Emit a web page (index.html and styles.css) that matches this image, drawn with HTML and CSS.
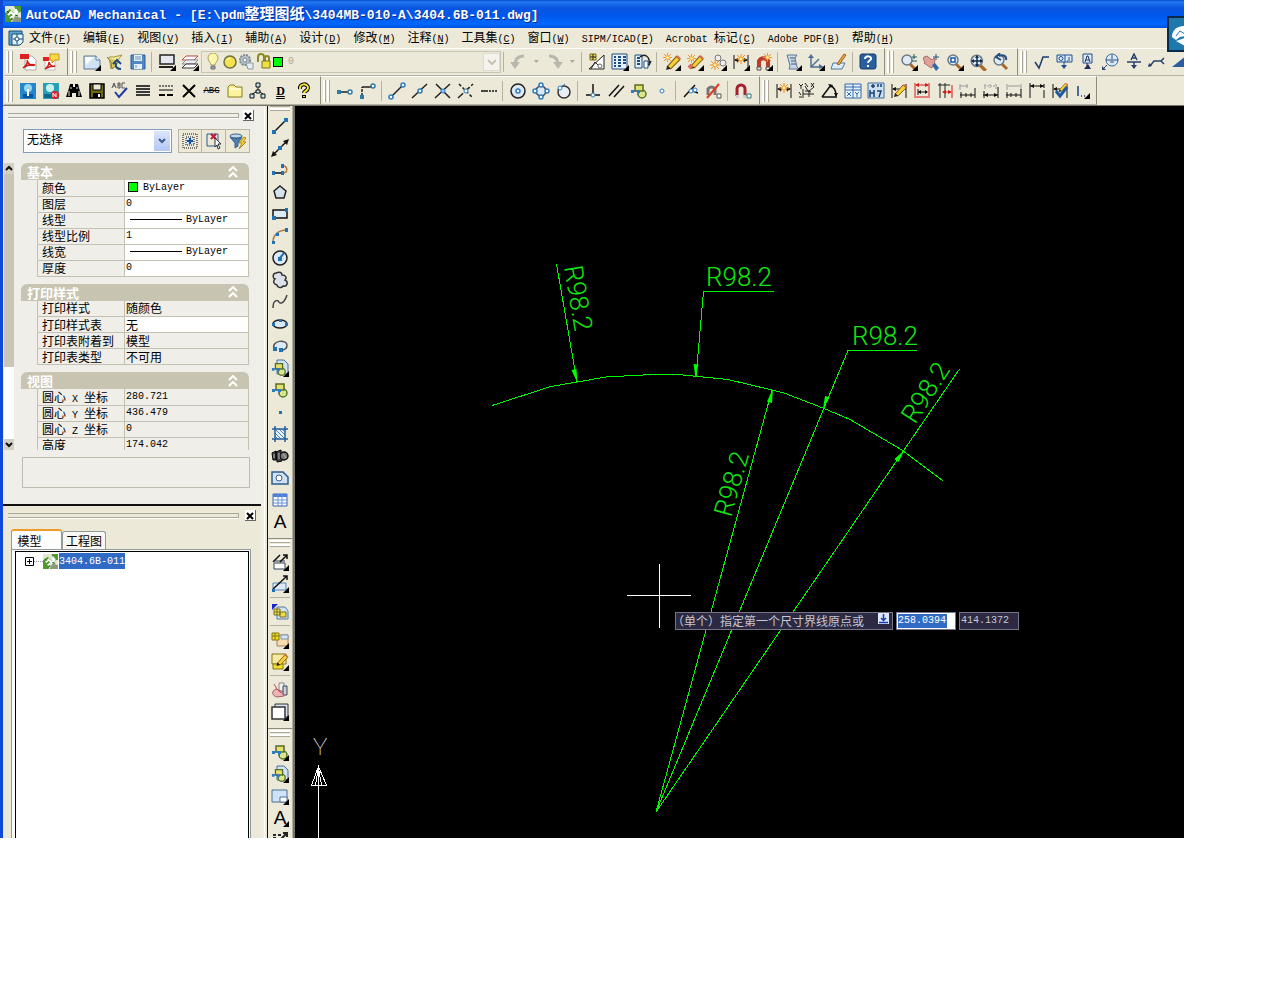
FILE: index.html
```html
<!DOCTYPE html>
<html lang="zh-CN">
<head>
<meta charset="utf-8">
<title>AutoCAD Mechanical</title>
<link rel="stylesheet" href="styles.css">
</head>
<body>
<svg class="sprite" aria-hidden="true">
  <symbol id="fly" viewBox="0 0 18 18"><path d="M18 12v6h-6z" fill="#000" stroke="none"/></symbol>
  <symbol id="app" viewBox="0 0 16 16"><rect width="16" height="16" fill="#dfe8d0" stroke="none"/><path d="M0 16V7l5-4 4 4-3 9zM9 0h7v6l-4 1z" fill="#4f9a2c" stroke="none"/><path d="M7 16l3-6 6 2v4z" fill="#8a9a80" stroke="none"/><path d="M3 9l3-3 3 3 4-4M5 12l3-2M11 3v4" stroke="#fff" stroke-width="2" fill="none"/><path d="M2 5l2 2M10 9l3 1M6 13h2" stroke="#28481c"/></symbol>
  <symbol id="burst" viewBox="0 0 10 10"><path d="M5 0v10M0 5h10M1 1l8 8M9 1L1 9" stroke="#f08a28" fill="none"/><circle cx="5" cy="5" r="2" fill="#fff6a0" stroke="#f0a030"/></symbol>
  <symbol id="pencil" viewBox="0 0 14 14"><path d="M2 11L10 2l3 3-8 8z" fill="#f5cf3a" stroke="#8a6410"/><path d="M10 2l1-1 3 3-1 1z" fill="#e06a5a" stroke="none"/><path d="M2 10l3 3-4 1z" fill="#222" stroke="none"/></symbol>
  <symbol id="blocks" viewBox="0 0 18 18"><circle cx="12" cy="12" r="4" fill="#dbe68c" stroke="#55772c" stroke-width="1.500"/><path d="M5 3h8v6H5z" fill="#e4e070" stroke="#5a6c20" stroke-width="1.500"/><path d="M3 9h5v4" stroke="#2a6db0"/><path d="M1 8h3v3H1zM7 8h3v3H7z" fill="#2a7cc4" stroke="none"/></symbol>
  <symbol id="lens" viewBox="0 0 18 18"><path d="M10 11l5 5" stroke="#a9682c" stroke-width="3"/><circle cx="7" cy="7" r="5" fill="#dfeaf4" stroke="#6b7885" stroke-width="1.500"/></symbol>
  <symbol id="dimh" viewBox="0 0 18 18"><path d="M2 2v14M16 2v14M3 7h12" stroke="#111"/><path d="M2 7l4-2v4zM16 7l-4-2v4z" fill="#111" stroke="none"/></symbol>
  <symbol id="up2" viewBox="0 0 10 12"><path d="M1 5l4-4 4 4M1 11l4-4 4 4" fill="none" stroke="#fff" stroke-width="2"/></symbol>
</svg>
<div class="app">
  <header class="titlebar">
    <svg class="app-icon"><use href="#app"/></svg>
    <h1>AutoCAD Mechanical - [E:\pdm<span class="cjk">整理图纸</span>\3404MB-010-A\3404.6B-011.dwg]</h1>
  </header>
  <nav class="menubar">
    <svg class="menu-icon"><path d="M1 1h13v11l-3 3H1z" fill="#5aa6d0" stroke="#174a78"/><path d="M4 4h11v8l-3 3H4z" fill="#e4f2fb" stroke="#174a78"/><path d="M9 4v10M5 9h10" stroke="#174a78"/><circle cx="9" cy="9" r="2" fill="#fff" stroke="#174a78"/></svg>
    <button>文件<span class="lat">(<u>F</u>)</span></button><button>编辑<span class="lat">(<u>E</u>)</span></button><button>视图<span class="lat">(<u>V</u>)</span></button><button>插入<span class="lat">(<u>I</u>)</span></button><button>辅助<span class="lat">(<u>A</u>)</span></button><button>设计<span class="lat">(<u>D</u>)</span></button><button>修改<span class="lat">(<u>M</u>)</span></button><button>注释<span class="lat">(<u>N</u>)</span></button><button>工具集<span class="lat">(<u>C</u>)</span></button><button>窗口<span class="lat">(<u>W</u>)</span></button><button><span class="lat">SIPM/ICAD(<u>P</u>)</span></button><button><span class="lat">Acrobat </span>标记<span class="lat">(<u>C</u>)</span></button><button><span class="lat">Adobe PDF(<u>B</u>)</span></button><button>帮助<span class="lat">(<u>H</u>)</span></button>
  </nav>
  <div class="bars">
    <div class="bar-row">
      <div class="bar"><i class="grip"></i>
        <button class="t" aria-label="转换为 PDF"><svg class="i"><path d="M6 3h7l4 4v10H6z" fill="#fff" stroke="#aaa"/><path d="M1 1h9v5H1z" fill="#e02020" stroke="none"/><path d="M4 15c4-3 5-6 4-8 1 4 4 6 8 5-4-1-8 0-12 3z" stroke="#d01818" stroke-width="1.500"/></svg></button>
        <button class="t" aria-label="PDF 注释"><svg class="i"><path d="M3 7h10v10H3z" fill="#fff" stroke="#bbb"/><path d="M8 1h9v6h-4l-3 3V7H8z" fill="#f8d948" stroke="#c59a18"/><path d="M1 4h6v4H1z" fill="#e02020" stroke="none"/><path d="M3 16c4-3 4-5 4-7 1 3 3 5 6 4-3 0-7 1-10 3z" stroke="#d01818" stroke-width="1.500"/></svg></button>
      </div>
      <div class="bar"><i class="grip"></i>
        <button class="t" aria-label="新建"><svg class="i"><path d="M1 3h12l4 4v9H1z" fill="#cfe2f6" stroke="#5a7898"/><path d="M2 4h9l-8 8z" fill="#fff" stroke="none"/><path d="M13 3v4h4" fill="#fff" stroke="#5a7898"/><use href="#fly"/></svg></button>
        <button class="t" aria-label="打开"><svg class="i"><path d="M3 4h5l8-2-5 6-6 8z" fill="#f6ed9a" stroke="#a39548"/><path d="M1 4l4 5 1 7 4-3 2-5" fill="#d8c95e" stroke="#8f8034"/><path d="M15 16c-4 0-6-2-5-6M7 11l4-4 4 4" stroke="#1f4a7e" stroke-width="2"/></svg></button>
        <button class="t" aria-label="保存"><svg class="i"><path d="M2 2h14v14H2z" fill="#5288c4" stroke="#2d5f9c"/><path d="M5 2h8v6H5zM5 11h8v5H5z" fill="#e6f0fa" stroke="none"/><path d="M6 4h6M6 6h6M7 12v3" stroke="#6d94be"/></svg></button>
        <i class="sep"></i>
        <button class="t" aria-label="显示"><svg class="i"><path d="M2 2h14v9H2z" fill="#e4e6f0" stroke="#222" stroke-width="1.500"/><path d="M1 14h14" stroke="#222" stroke-width="2"/><use href="#fly"/></svg></button>
        <button class="t" aria-label="图层"><svg class="i"><path d="M5 3h12l-4 4H1z" fill="#fff" stroke="#b94848"/><path d="M5 7h12l-4 4H1z" fill="#e9ecf2" stroke="#8b8e94"/><path d="M5 11h12l-4 4H1z" fill="#fff" stroke="#333"/><use href="#fly"/></svg></button>
        <div class="layer-combo">
          <svg class="i"><path d="M6 12c0-2-3-4-3-7a5 5 0 0 1 10 0c0 3-3 5-3 7z" fill="#fff6ae" stroke="#a8a05a"/><path d="M6 13h4v3H6z" fill="#9aa0a8" stroke="#6b7078"/></svg><svg class="i"><circle cx="8" cy="9" r="6" fill="#f4e24e" stroke="#6c7040" stroke-width="1.500"/><path d="M5 7l3-2" stroke="#fff"/></svg><svg class="i"><circle cx="6" cy="7" r="5" fill="#b9c4c8" stroke="#7d8b94" stroke-dasharray="2 1" stroke-width="2"/><circle cx="6" cy="7" r="2" fill="#eef" stroke="#7d8b94"/><path d="M7 10h7v6H9z" fill="#e9eef0" stroke="#8a9aa4"/></svg><svg class="i"><path d="M2 9V4a3 3 0 0 1 6 0v5M9 8V5a2 2 0 0 1 4 0v3" stroke="#8a8a20" stroke-width="2"/><path d="M6 8h8v7H6z" fill="#f0e040" stroke="#77771c"/></svg><span class="swatch"></span><span class="lat dim">0</span>
          <button class="combo-arrow" aria-label="图层列表"><svg class="i9"><path d="M1 2l4 4 4-4" stroke="#c4c1b4" stroke-width="2"/></svg></button>
        </div>
        <i class="sep"></i>
        <button class="t" aria-label="放弃"><svg class="i"><path d="M14 3C8 3 5 6 5 12" stroke="#bab8ae" stroke-width="3"/><path d="M0 9h10l-5 7z" fill="#bab8ae" stroke="none"/></svg></button>
        <button class="tiny" aria-label="放弃列表"><svg class="i5"><path d="M0 0h5L2 3z" fill="#aaa89c" stroke="none"/></svg></button>
        <button class="t" aria-label="重做"><svg class="i"><path d="M3 3c6 0 9 3 9 9" stroke="#bab8ae" stroke-width="3"/><path d="M7 9h10l-5 7z" fill="#bab8ae" stroke="none"/></svg></button>
        <button class="tiny" aria-label="重做列表"><svg class="i5"><path d="M0 0h5L2 3z" fill="#aaa89c" stroke="none"/></svg></button>
        <i class="sep"></i>
        <button class="t" aria-label="设计中心"><svg class="i"><path d="M1 16L16 2v14z" fill="#fff" stroke="#222"/><path d="M2 1h6v6H2z" fill="#f0dc4c" stroke="#746a20"/><path d="M3 16L7 9l3 3M5 1v6M2 4h6" stroke="#222"/><circle cx="12" cy="13" r="2" stroke="#666"/></svg></button>
        <button class="t" aria-label="特性"><svg class="i"><path d="M1 1h15v15H1z" fill="#e6f0fa" stroke="#1d4d84"/><path d="M3 4h2M3 7h2M3 10h2M3 13h2M7 4h3M7 7h3M7 10h3M7 13h3M12 4h3M12 7h3M12 10h3" stroke="#1d4d84" stroke-width="2"/><use href="#fly"/></svg></button>
        <button class="t" aria-label="特性匹配"><svg class="i"><path d="M1 2h7v13H1z" fill="#e6f0fa" stroke="#1d4d84"/><path d="M3 5h3M3 8h3M3 11h3" stroke="#1d4d84" stroke-width="2"/><path d="M6 4c5-4 10 0 9 6M12 9l3 3 2-4" stroke="#222" stroke-width="1.500"/><path d="M10 8h4v7h-4z" fill="#fff" stroke="#1d4d84"/></svg></button>
        <i class="sep"></i>
        <button class="t" aria-label="增强编辑"><svg class="i"><use href="#burst" x="0" y="0" width="9" height="9"/><use href="#pencil" x="2" y="1" width="16" height="16"/><use href="#fly"/></svg></button>
        <button class="t" aria-label="增强删除"><svg class="i"><use href="#burst" x="1" y="1" width="9" height="9"/><use href="#pencil" x="3" y="1" width="15" height="15"/><path d="M3 15l3-3" stroke="#e06a5a" stroke-width="4"/><use href="#fly"/></svg></button>
        <button class="t" aria-label="增强复制"><svg class="i"><circle cx="9" cy="5" r="3" fill="#eee" stroke="#777"/><circle cx="14" cy="10" r="3" fill="#eee" stroke="#777"/><use href="#burst" x="1" y="7" width="10" height="10"/><use href="#fly"/></svg></button>
        <button class="t" aria-label="增强标注"><svg class="i"><use href="#dimh"/><use href="#burst" x="4" y="1" width="10" height="10"/><use href="#fly"/></svg></button>
        <button class="t" aria-label="增强捕捉"><svg class="i"><path d="M4 15V8a5 5 0 0 1 9 0v7" stroke="#c03a28" stroke-width="4"/><path d="M2 14h4v3H2zM11 14h4v3h-4z" fill="#ddd" stroke="#555"/><use href="#burst" x="8" y="0" width="9" height="9"/><use href="#fly"/></svg></button>
        <i class="sep"></i>
        <button class="t" aria-label="脚本"><svg class="i"><path d="M3 2h10l-2 3 2 9 2 2H5l1-3L4 5z" fill="#c9d7e8" stroke="#5f7692"/><path d="M6 5h5M7 8h4M7 11h5" stroke="#3e5878"/><use href="#fly"/></svg></button>
        <button class="t" aria-label="坐标系"><svg class="i"><path d="M4 3v11h10M4 14l8-8" stroke="#4a7096" stroke-width="1.500"/><path d="M1 5l3-4 3 4zM12 11l5 3-5 2z" fill="#4a7096" stroke="none"/><use href="#fly"/></svg></button>
        <button class="t" aria-label="编辑"><svg class="i"><path d="M3 10h12l-3 6H1z" fill="#dcebfa" stroke="#51769c"/><path d="M7 11l7-10 2 1-7 10z" fill="#f0a840" stroke="#99601c"/></svg></button>
        <i class="sep"></i>
        <button class="t" aria-label="帮助"><svg class="i"><rect x="1" y="1" width="16" height="15" rx="2" fill="#285f9c" stroke="#173f72"/><path d="M6 6c0-4 7-3 6 0-1 2-3 2-3 4M9 12v2" stroke="#fff" stroke-width="2"/></svg></button>
      </div>
      <div class="bar"><i class="grip"></i>
        <button class="t" aria-label="实时缩放"><svg class="i"><use href="#lens"/><path d="M12 4h5M14 1v5M12 8h5" stroke="#1c5a5c"/><use href="#fly"/></svg></button>
        <button class="t" aria-label="平移"><svg class="i"><path d="M1 4l3-1 5 4 2-2 1 1-1 7-3 2-4-3-3-2 1-1-2-3z" fill="#e2a09c" stroke="#a86a6a"/><path d="M9 12l3-2 4 5-3 3z" fill="#2f6aa4" stroke="none"/><path d="M13 1v6M10 4h6" stroke="#274e7c"/></svg></button>
        <button class="t" aria-label="窗口缩放"><svg class="i"><use href="#lens"/><path d="M5 5h4v4H5z" fill="#fff" stroke="#1d5aa0" stroke-width="1.500"/><use href="#fly"/></svg></button>
        <button class="t" aria-label="全部缩放"><svg class="i"><use href="#lens" width="20" height="20"/><path d="M8 3v10M3 8h10" stroke="#142c4c" stroke-width="1.500"/><path d="M8 2l2 3H6zM8 14l2-3H6zM2 8l3-2v4zM14 8l-3-2v4z" fill="#142c4c" stroke="none"/></svg></button>
        <button class="t" aria-label="上一个缩放"><svg class="i"><use href="#lens"/><path d="M14 7c1-4-3-6-7-4M8 0L4 4l5 3" stroke="#244c7c" stroke-width="2"/></svg></button>
      </div>
      <div class="bar"><i class="grip"></i>
        <button class="t" aria-label="表面粗糙度"><svg class="i"><path d="M2 9l4 6 4-11h6" stroke="#1e3f6c" stroke-width="1.500"/></svg></button>
        <button class="t" aria-label="形位公差"><svg class="i"><path d="M1 2h15v7H1z" fill="#dcebfa" stroke="#1f4f8c"/><circle cx="5" cy="5.500" r="2" stroke="#1f4f8c"/><path d="M9 2v7M13 4v4M11 8h1M8 9v6" stroke="#1f4f8c"/><path d="M5 12h6l-3 4z" fill="#1f4f8c" stroke="none"/></svg></button>
        <button class="t" aria-label="基准"><svg class="i"><path d="M4 1h9v9H4z" fill="#dcebfa" stroke="#1f4f8c"/><path d="M6 9l2-6h1l2 6M7 7h3M8 10v3" stroke="#1f2f5c"/><path d="M5 16h7l-3-5z" fill="#1f2f5c" stroke="none"/></svg></button>
        <button class="t" aria-label="零件引用"><svg class="i"><circle cx="10" cy="7" r="6" fill="#dcebfa" stroke="#3a6298"/><path d="M4 7h12M10 2v4M8 9h4M5 12l-4 4" stroke="#274878"/><path d="M0 13l4 4H0z" fill="#274878" stroke="none"/></svg></button>
        <button class="t" aria-label="标记"><svg class="i"><path d="M6 7l3-6 3 6M7 5h4M2 9h14M9 9v6" stroke="#27406c" stroke-width="1.500"/><path d="M6 12h6l-3 4z" fill="#27406c" stroke="none"/></svg></button>
        <button class="t" aria-label="引线"><svg class="i"><path d="M2 13l4-5h7l3-3M13 8l3 3" stroke="#27406c" stroke-width="1.500"/><path d="M0 14l4-1-3-3z" fill="#27406c" stroke="none"/></svg></button>
        <button class="t" aria-label="锥度"><svg class="i"><path d="M1 14L16 2v12z" fill="#2b5ba0" stroke="none"/></svg></button>
      </div>
    </div>
    <div class="bar-row">
      <div class="bar"><i class="grip"></i>
        <button class="t" aria-label="检入"><svg class="i"><path d="M1 1h16v16H1z" fill="#2485cc" stroke="none"/><circle cx="9" cy="6" r="4" fill="#8fd6ee" stroke="none"/><path d="M4 12h10v4H4z" fill="#07559b" stroke="none"/><path d="M9 7v7" stroke="#fff" stroke-width="2"/></svg></button>
        <button class="t" aria-label="检出"><svg class="i"><path d="M1 1h16v16H1z" fill="#28a0b8" stroke="none"/><circle cx="8" cy="6" r="4" fill="#c8f0ee" stroke="none"/><path d="M2 12h10v4H2z" fill="#086b88" stroke="none"/><circle cx="13" cy="13" r="4" fill="#e01c2c" stroke="none"/><path d="M11 15v-4l3 4v-4" stroke="#fff"/></svg></button>
        <button class="t" aria-label="查找"><svg class="i"><path d="M5 2h3v3h2V2h3l1 4 3 9h-6v-4H7v4H1l3-9z" fill="#000" stroke="none"/><path d="M4 9v5M14 9v5M6 5v2M12 5v2" stroke="#ece9d8"/></svg></button>
        <button class="t" aria-label="保存全部"><svg class="i"><path d="M2 2h14v14H2z" fill="#6a6a10" stroke="#000" stroke-width="1.500"/><path d="M5 2h8v6H5z" fill="#ece9d8" stroke="#000"/><path d="M5 11h8v5H5z" fill="#000" stroke="none"/><path d="M10 12h2v3h-2z" fill="#fff" stroke="none"/></svg></button>
        <button class="t" aria-label="拼写检查"><svg class="i"><path d="M1 6l2-5 2 5M2 4h2M7 1v5h2V1zM7 3h2M14 1h-3v5h3" stroke="#555"/><path d="M4 10l4 5 8-9" stroke="#203aa0" stroke-width="2"/></svg></button>
        <button class="t" aria-label="线型"><svg class="i"><path d="M2 4h14M2 7h14M2 10h14M2 13h14" stroke="#000" stroke-width="1.500"/></svg></button>
        <button class="t" aria-label="线宽"><svg class="i"><path d="M2 4h14" stroke="#000" stroke-dasharray="2 1"/><path d="M2 8h14" stroke="#000"/><path d="M2 13h14" stroke="#000" stroke-width="2" stroke-dasharray="6 2"/></svg></button>
        <button class="t" aria-label="删除"><svg class="i"><path d="M3 3l12 12M15 3L3 15" stroke="#000" stroke-width="2"/></svg></button>
        <button class="t lat abc" aria-label="删除文字">ABC</button>
        <button class="t" aria-label="文件夹"><svg class="i"><path d="M2 5l2-2h4l2 2h6v10H2z" fill="#fbf39c" stroke="#8a7a1c"/><path d="M3 7h12" stroke="#fff"/></svg></button>
        <button class="t" aria-label="结构树"><svg class="i"><path d="M7 1h4v4H7zM1 12h4v4H1zM12 12h4v4h-4zM7 8h4v3H7z" fill="#bfe2ee" stroke="#111"/><path d="M9 5v3M7 10l-4 2M11 10l3 2" stroke="#111"/></svg></button>
        <button class="t dbl" aria-label="明细">D</button>
        <button class="t" aria-label="问号帮助"><svg class="i"><path d="M5 7c-1-6 8-6 8-1 0 3-4 3-4 5M9 13v3" stroke="#000" stroke-width="4"/><path d="M5 7c-1-6 8-6 8-1 0 3-4 3-4 5M9 14v1" stroke="#f8e838" stroke-width="2"/></svg></button>
      </div>
      <div class="bar"><i class="grip"></i>
        <button class="t" aria-label="临时追踪点"><svg class="i"><path d="M3 10h11" stroke="#222" stroke-width="1.500"/><path d="M1 8h4v4H1z" fill="#2d7ba8" stroke="none"/><circle cx="14" cy="10" r="2" fill="#fff" stroke="#2d7ba8" stroke-width="1.500"/></svg></button>
        <button class="t" aria-label="捕捉自"><svg class="i"><path d="M3 14V5" stroke="#222" stroke-dasharray="3 1" stroke-width="1.500"/><path d="M3 5h10" stroke="#222" stroke-width="1.500"/><path d="M1 13h4v4H1z" fill="#2d7ba8" stroke="none"/><circle cx="14" cy="4" r="2" fill="#fff" stroke="#2d7ba8" stroke-width="1.500"/></svg></button>
        <i class="sep"></i>
        <button class="t" aria-label="端点"><svg class="i"><path d="M3 15L15 3" stroke="#222" stroke-width="1.500"/><circle cx="3" cy="15" r="2" fill="#fff" stroke="#2d7bc0" stroke-width="1.500"/><circle cx="15" cy="3" r="2" fill="#fff" stroke="#2d7bc0" stroke-width="1.500"/></svg></button>
        <button class="t" aria-label="中点"><svg class="i"><path d="M1 16L16 2" stroke="#222" stroke-width="1.500"/><circle cx="9" cy="9" r="2" fill="#fff" stroke="#2d7bc0" stroke-width="1.500"/></svg></button>
        <button class="t" aria-label="交点"><svg class="i"><path d="M1 16L16 2M2 2l14 14" stroke="#222" stroke-width="1.500"/><circle cx="9" cy="9" r="2" fill="#8cf" stroke="#2d7bc0"/></svg></button>
        <button class="t" aria-label="外观交点"><svg class="i"><path d="M1 16L16 2" stroke="#222" stroke-width="1.500" stroke-dasharray="7 2"/><path d="M2 2l14 14" stroke="#222" stroke-width="1.500" stroke-dasharray="3 2"/><circle cx="9" cy="9" r="2" fill="#fff" stroke="#2d7bc0"/></svg></button>
        <button class="t" aria-label="延长线"><svg class="i"><path d="M1 9h7" stroke="#111" stroke-width="1.500"/><path d="M9 9h8" stroke="#111" stroke-width="1.500" stroke-dasharray="2 1"/></svg></button>
        <i class="sep"></i>
        <button class="t" aria-label="圆心"><svg class="i"><circle cx="9" cy="9" r="7" fill="#dce9f4" stroke="#222" stroke-width="1.500"/><circle cx="9" cy="9" r="2" fill="#fff" stroke="#2d7bc0" stroke-width="1.500"/></svg></button>
        <button class="t" aria-label="象限点"><svg class="i"><circle cx="9" cy="9" r="5" fill="#dce9f4" stroke="#445" stroke-width="1.500"/><g fill="#fff" stroke="#2d7bc0" stroke-width="1.500"><circle cx="9" cy="3" r="2"/><circle cx="9" cy="15" r="2"/><circle cx="3" cy="9" r="2"/><circle cx="15" cy="9" r="2"/></g></svg></button>
        <button class="t" aria-label="切点"><svg class="i"><circle cx="9" cy="10" r="6" fill="#e8eef2" stroke="#333" stroke-width="1.500"/><path d="M2 8l8-6" stroke="#2d7bc0"/><circle cx="5" cy="6" r="2" fill="#fff" stroke="#2d7bc0"/></svg></button>
        <i class="sep"></i>
        <button class="t" aria-label="垂足"><svg class="i"><path d="M2 13h14M9 2v11" stroke="#111" stroke-width="1.500"/><circle cx="9" cy="13" r="2" fill="#fff" stroke="#2d7bc0"/></svg></button>
        <button class="t" aria-label="平行线"><svg class="i"><path d="M2 14L12 3M7 15L17 4" stroke="#111" stroke-width="1.500"/></svg></button>
        <button class="t" aria-label="插入点"><svg class="i"><use href="#blocks"/></svg></button>
        <button class="t" aria-label="节点"><svg class="i"><circle cx="9" cy="9" r="2" fill="#fff" stroke="#2d7bc0"/></svg></button>
        <i class="sep"></i>
        <button class="t" aria-label="最近点"><svg class="i"><path d="M2 15L13 3M8 8l8 3" stroke="#111" stroke-width="1.500"/><circle cx="9" cy="9" r="2" fill="#fff" stroke="#2d7bc0"/><circle cx="13" cy="8" r="2" fill="#fff" stroke="#2d7bc0"/></svg></button>
        <button class="t" aria-label="无捕捉"><svg class="i"><path d="M3 13V7a4 4 0 0 1 7 0v6" stroke="#777" stroke-width="3"/><path d="M2 16L14 2" stroke="#e03a20" stroke-width="2"/><path d="M12 12h4v4h-4z" fill="#fff" stroke="#555"/></svg></button>
        <i class="sep"></i>
        <button class="t" aria-label="捕捉设置"><svg class="i"><path d="M3 14V7a4 4 0 0 1 8 0v7" stroke="#a82030" stroke-width="3"/><path d="M2 13h3v3H2zM9 13h3v3H9z" fill="#ccc" stroke="none"/><path d="M13 12h4v4h-4z" fill="#fff" stroke="#1c7a80"/></svg></button>
      </div>
      <div class="bar"><i class="grip"></i>
        <button class="t" aria-label="智能标注"><svg class="i"><use href="#dimh"/><use href="#burst" x="4" y="1" width="10" height="10"/></svg></button>
        <button class="t" aria-label="坐标标注"><svg class="i"><path d="M5 7v9M5 12h11M7 9h4l5-4M11 9v6M1 2l2 2 2-2M3 4v3M13 1l3 4M16 1l-3 4M7 1l3 4M1 10l2 3M1 15h3" stroke="#222"/><path d="M7 4l3 5 3 1" stroke="#222"/></svg></button>
        <button class="t" aria-label="角度标注"><svg class="i"><path d="M1 15h15M1 15L10 3M9 3c4 2 6 6 6 11" stroke="#111" stroke-width="1.500"/><path d="M7 2l5 1-2 3zM13 11h4l-2 4z" fill="#111" stroke="none"/></svg></button>
        <button class="t" aria-label="坐标表"><svg class="i"><path d="M1 2h16v14H1z" fill="#eaf3fc" stroke="#3368a8"/><path d="M1 5h16M1 8h16M9 2v14M3 10l4 4M7 10l-4 4M11 10l2 2 2-2M13 12v3" stroke="#3368a8"/></svg></button>
        <button class="t" aria-label="配合"><svg class="i"><path d="M1 1h16v15H1z" fill="#cfe0f0" stroke="#3a6ea5"/><path d="M4 4h4M6 2v4M11 2v3M14 2v3M3 8v7M7 8v7M3 11h4M10 9h4l-2 6" stroke="#163f74" stroke-width="1.500"/></svg></button>
        <button class="t" aria-label="编辑标注"><svg class="i"><use href="#dimh"/><use href="#pencil" x="3" y="1" width="14" height="14"/></svg></button>
        <button class="t" aria-label="对齐标注"><svg class="i"><path d="M2 1v15M16 1v15M3 3h12M3 15h12" stroke="#d81818"/><path d="M2 3l4-2v4zM16 3l-4-2v4z" fill="#d81818" stroke="none"/><path d="M5 10h9M5 7v6" stroke="#111"/><path d="M5 10l3-2v4zM15 10l-3-2v4z" fill="#111" stroke="none"/></svg></button>
        <button class="t" aria-label="合并标注"><svg class="i"><path d="M2 3h12M4 1v15M9 1v15" stroke="#222"/><path d="M7 10h8M16 3v13" stroke="#d81818"/><path d="M6 10l4-2v4zM16 10l-4-2v4z" fill="#d81818" stroke="none"/></svg></button>
        <button class="t" aria-label="连续标注"><svg class="i"><path d="M1 4h8M1 2v6M8 2v4" stroke="#999"/><path d="M1 13h15M2 10v6M7 11v4M12 11v4M16 6v10" stroke="#111"/></svg></button>
        <button class="t" aria-label="基线标注"><svg class="i"><path d="M2 4h13M3 2v5M8 2v4M14 2v5" stroke="#999" stroke-dasharray="2 1"/><path d="M1 13h15M2 9v7M16 5v11" stroke="#111"/><path d="M2 13l4-2v4zM16 13l-4-2v4z" fill="#111" stroke="none"/></svg></button>
        <button class="t" aria-label="打断标注"><svg class="i"><path d="M3 4h12M2 2v6M16 2v6" stroke="#999"/><path d="M1 13h15M2 10v6M6 11v4M11 11v4M16 7v9" stroke="#111"/></svg></button>
        <button class="t" aria-label="拉伸标注"><svg class="i"><path d="M2 1v15M2 4h14M16 2v4M16 8v8" stroke="#111"/><path d="M2 4l4-2v4zM16 4l-4-2v4z" fill="#111" stroke="none"/></svg></button>
        <button class="t" aria-label="检查标注"><svg class="i"><use href="#dimh"/><use href="#pencil" x="7" y="0" width="10" height="10"/><path d="M5 9l4 5 7-9" stroke="#1f5ba4" stroke-width="3"/></svg></button>
        <button class="t" aria-label="标注样式"><svg class="i"><path d="M4 4v10M7 14h1M10 14h1" stroke="#1f3f84" stroke-width="1.500"/><use href="#fly" x="-2" y="-1"/></svg></button>
      </div>
    </div>
  </div>
  <div class="workspace">
    <aside class="side">
      <section class="props">
        <div class="dock-grip"><i></i><button class="close" aria-label="关闭特性"><svg class="i9"><path d="M1 2l6 6M7 2L1 8" stroke="#000" stroke-width="2"/></svg></button></div>
        <div class="picker">
          <div class="select-wrap"><select aria-label="选择对象"><option>无选择</option></select><span class="drop"><svg class="i9"><path d="M1 2l3 3 3-3" stroke="#3c5a8c" stroke-width="2"/></svg></span></div>
          <div class="pick-buttons">
            <button aria-label="切换 PICKADD"><svg class="i"><path d="M2 2h14v14H2z" stroke="#111" stroke-dasharray="1 1"/><path d="M5 5h8v8H5z" fill="#d3e6f8" stroke="#111" stroke-dasharray="1 1"/><path d="M9 6v6M6 9h6" stroke="#16529c" stroke-width="2"/></svg></button>
            <button aria-label="选择对象"><svg class="i"><path d="M2 2h11v12H2z" stroke="#2a5c94"/><path d="M6 2l5 5M11 2L6 7" stroke="#c01838" stroke-width="2"/><path d="M10 6l6 6h-3l2 4-2 1-1-4-2 2z" fill="#fff" stroke="#333"/></svg></button>
            <button aria-label="快速选择"><svg class="i"><ellipse cx="7" cy="4" rx="6" ry="2" fill="#c3d7ea" stroke="#365e88"/><path d="M1 5l5 6v5l3-2v-3l4-6c-3 2-9 2-12 0z" fill="#4b80b0" stroke="#365e88"/><path d="M15 5l-5 6h3l-3 6 7-7h-3l3-4z" fill="#fbd438" stroke="#b18a18"/></svg></button>
          </div>
        </div>
        <div class="prop-body">
          <div class="scroll"><button aria-label="向上滚动"><svg class="i9"><path d="M1 6l3-3 3 3" stroke="#111" stroke-width="2"/></svg></button><i class="thumb"></i><i class="track"></i><button aria-label="向下滚动"><svg class="i9"><path d="M1 3l3 3 3-3" stroke="#111" stroke-width="2"/></svg></button></div>
          <div class="groups">
            <section class="group"><h2>基本<button aria-label="折叠基本"><svg><use href="#up2"/></svg></button></h2>
              <table><tr><th>颜色</th><td class="w"><span class="swatch"></span>ByLayer</td></tr><tr><th>图层</th><td class="w">0</td></tr><tr><th>线型</th><td class="w"><span class="rule"></span>ByLayer</td></tr><tr><th>线型比例</th><td class="w">1</td></tr><tr><th>线宽</th><td class="w"><span class="rule"></span>ByLayer</td></tr><tr><th>厚度</th><td class="w">0</td></tr></table></section>
            <section class="group"><h2>打印样式<button aria-label="折叠打印样式"><svg><use href="#up2"/></svg></button></h2>
              <table><tr><th>打印样式</th><td class="c">随颜色</td></tr><tr><th>打印样式表</th><td class="c w">无</td></tr><tr><th>打印表附着到</th><td class="c">模型</td></tr><tr><th>打印表类型</th><td class="c">不可用</td></tr></table></section>
            <section class="group"><h2>视图<button aria-label="折叠视图"><svg><use href="#up2"/></svg></button></h2>
              <table><tr><th>圆心<span class="lat"> X </span>坐标</th><td>280.721</td></tr><tr><th>圆心<span class="lat"> Y </span>坐标</th><td>436.479</td></tr><tr><th>圆心<span class="lat"> Z </span>坐标</th><td>0</td></tr><tr><th>高度</th><td>174.042</td></tr></table></section>
          </div>
        </div>
        <div class="hint"></div>
      </section>
      <section class="browser">
        <div class="dock-grip"><i></i><button class="close" aria-label="关闭浏览器"><svg class="i9"><path d="M1 2l6 6M7 2L1 8" stroke="#000" stroke-width="2"/></svg></button></div>
        <div class="tabs"><button class="tab on">模型</button><button class="tab">工程图</button></div>
        <div class="tab-page"><div class="tree"><div class="node"><button class="plus" aria-label="展开"><svg class="i9"><path d="M.5.500h8v8h-8zM2 4.500h5M4.500 2v5" stroke="#000"/></svg></button><i class="dots"></i><svg class="node-icon"><use href="#app"/></svg><span class="lat picked">3404.6B-011</span></div></div></div>
      </section>
    </aside>
    <div class="vbar-strip">
      <div class="vbar"><i class="vgrip"></i>
        <button class="v" aria-label="直线"><svg class="i"><path d="M3 15L15 3" stroke="#111" stroke-width="1.500"/><path d="M1 13h4v4H1zM13 1h4v4h-4z" fill="#1f72b8" stroke="none"/></svg></button>
        <button class="v" aria-label="构造线"><svg class="i"><path d="M2 16L16 2" stroke="#111" stroke-width="1.500"/><path d="M0 18l2-6 4 4zM18 0l-6 2 4 4z" fill="#111" stroke="none"/><path d="M7 7h4v4H7z" fill="#1f72b8" stroke="none"/></svg></button>
        <button class="v" aria-label="多段线"><svg class="i"><path d="M2 12h10" stroke="#111" stroke-width="1.500"/><path d="M12 12c5 0 5-7 0-7" stroke="#b87838" stroke-width="1.500"/><path d="M1 10h3v4H1zM10 10h3v4h-3zM10 3h3v4h-3z" fill="#1f72b8" stroke="none"/></svg></button>
        <button class="v" aria-label="正多边形"><svg class="i"><path d="M9 3l6 5-2 7H5L3 8z" fill="#d4e2ee" stroke="#222" stroke-width="1.500"/></svg></button>
        <button class="v" aria-label="矩形"><svg class="i"><path d="M2 5h14v8H2z" fill="#dce9f6" stroke="#111" stroke-width="1.500"/><path d="M1 11h4v4H1zM14 3h3v4h-3z" fill="#1f72b8" stroke="none"/></svg></button>
        <button class="v" aria-label="圆弧"><svg class="i"><path d="M2 15C2 8 7 3 16 3" stroke="#a87848" stroke-width="1.500"/><path d="M1 14h3v3H1zM5 6h3v3H5zM14 1h3v4h-3z" fill="#1f72b8" stroke="none"/></svg></button>
        <button class="v" aria-label="圆"><svg class="i"><circle cx="9" cy="9" r="7" fill="#dce9f6" stroke="#222" stroke-width="1.500"/><path d="M8 10l5-6" stroke="#1f72b8" stroke-width="2"/><path d="M7 8h4v4H7z" fill="#1f72b8" stroke="none"/></svg></button>
        <button class="v" aria-label="修订云线"><svg class="i"><path d="M5 2c4-2 6 0 6 2 4 0 5 3 3 5 4 2 2 7-2 6-2 3-6 1-6-1-4-1-4-4-2-6-3-1-2-6 1-6z" fill="#dce2ea" stroke="#333" stroke-width="1.500"/></svg></button>
        <button class="v" aria-label="样条曲线"><svg class="i"><path d="M2 15C2 6 7 7 8 9s5 2 8-7" stroke="#444" stroke-width="1.500"/></svg></button>
        <button class="v" aria-label="椭圆"><svg class="i"><ellipse cx="9" cy="9" rx="7" ry="4" fill="#dce9f6" stroke="#222" stroke-width="1.500"/><path d="M1 8h3v3H1zM14 8h3v3h-3zM8 4h3v3H8z" fill="#1f72b8" stroke="none"/></svg></button>
        <button class="v" aria-label="椭圆弧"><svg class="i"><path d="M3 12C0 3 16 2 16 8c0 4-3 5-6 5" fill="#dce9f6" stroke="#555" stroke-width="1.500"/><path d="M2 10h4v4H2zM8 11h4v4H8z" fill="#1f72b8" stroke="none"/></svg></button>
        <button class="v" aria-label="插入块"><svg class="i"><path d="M6 1h7l4 4v10H6z" fill="#cfe2f6" stroke="#4a7098"/><use href="#blocks" y="2" width="16" height="16"/><use href="#fly"/></svg></button>
        <button class="v" aria-label="创建块"><svg class="i"><use href="#blocks"/></svg></button>
        <button class="v" aria-label="点"><svg class="i"><path d="M8 8h3v3H8z" fill="#1f72b8" stroke="none"/></svg></button>
        <button class="v" aria-label="图案填充"><svg class="i"><path d="M4 4h10v10H4z" fill="#e8f2fb" stroke="none"/><path d="M5 5l9 9M8 4l6 6M4 8l6 6M11 4l3 3M4 11l3 3" stroke="#4a80b8"/><path d="M4 1v16M14 1v16M1 4h16M1 14h16" stroke="#235f9c" stroke-width="1.500"/></svg></button>
        <button class="v" aria-label="查找零件"><svg class="i"><path d="M1 6l4-2v9H2zM5 5l5-2 1 11-5 1z" fill="#444" stroke="#000"/><circle cx="13" cy="9" r="4" fill="#777" stroke="#111" stroke-width="1.500"/><path d="M3 7v4M8 6v6M12 7l3 4" stroke="#bbb"/></svg></button>
        <button class="v" aria-label="面域"><svg class="i"><path d="M1 3h11l5 5v7H1z" fill="#cfe2f6" stroke="#2f5c8c" stroke-width="1.500"/><circle cx="8" cy="9" r="3" fill="#fff" stroke="#2f5c8c"/></svg></button>
        <button class="v" aria-label="表格"><svg class="i"><path d="M2 3h14v12H2z" fill="#fff" stroke="#3562b8"/><path d="M2 3h14v3H2z" fill="#4e7fd8" stroke="none"/><path d="M2 9h14M2 12h14M7 4v11M11 4v11" stroke="#6890d8"/></svg></button>
        <button class="v big" aria-label="多行文字">A</button>
      </div>
      <div class="vbar"><i class="vgrip"></i>
        <button class="v" aria-label="复制图形"><svg class="i"><path d="M3 10h11v6H3zM4 8h10" fill="#fff" stroke="#345"/><path d="M2 9l7-7M9 9l7-7M12 2h4v4" stroke="#111" stroke-width="1.500"/><use href="#fly"/></svg></button>
        <button class="v" aria-label="拉伸"><svg class="i"><path d="M2 8h13v7H2z" fill="#dce9f6" stroke="#5a88b8"/><path d="M2 14l14-13M12 1h4v4" stroke="#111" stroke-width="1.500"/><path d="M1 14h3v3H1z" fill="#1f72b8" stroke="none"/><use href="#fly"/></svg></button>
        <i class="vsep"></i>
        <button class="v" aria-label="零件库"><svg class="i"><path d="M1 1h6L1 7z" fill="#1628d0" stroke="none"/><path d="M6 4h8l3 4v8H6z" fill="#cfe2f6" stroke="#547aa4"/><path d="M3 6h6v6H3zM9 9h6v5H9z" fill="#f0df48" stroke="#786e20"/><path d="M6 6v6M3 9h6" stroke="#786e20"/></svg></button>
        <i class="vsep"></i>
        <button class="v" aria-label="零件装配"><svg class="i"><path d="M6 7l3-3h8v11H6z" fill="#f7dcb0" stroke="#a08050"/><path d="M10 4h7v4h-7z" fill="#d6e6f8" stroke="#7895b8"/><path d="M1 2h7v7H1zM1 5h7M4 2v7" fill="#f0df28" stroke="#847410"/><use href="#fly"/></svg></button>
        <button class="v" aria-label="修改零件"><svg class="i"><path d="M1 1h14v10H1z" fill="#f7e9a0" stroke="#847410"/><path d="M2 11h10v5H2z" fill="#f0df28" stroke="#847410"/><use href="#pencil" x="4" y="0" width="14" height="13"/><use href="#fly"/></svg></button>
        <i class="vsep"></i>
        <button class="v" aria-label="螺钉连接"><svg class="i"><path d="M8 2h5v8H8z" fill="#eee" stroke="#888"/><path d="M12 5h4v9h-4z" fill="#c7ced8" stroke="#445"/><path d="M5 8c-5 2-4 7 1 8l7-1-3-5z" fill="#efb4b4" stroke="#a05c64"/><path d="M3 3l3 5 4 4" stroke="#c84848"/></svg></button>
        <button class="v" aria-label="图框"><svg class="i"><path d="M4 1h13v13H4z" fill="#d8e2ee" stroke="#333"/><path d="M1 4h13v12H1z" fill="#fff" stroke="#333" stroke-width="1.500"/><use href="#fly"/></svg></button>
      </div>
      <div class="vbar"><i class="vgrip"></i>
        <button class="v" aria-label="块"><svg class="i"><use href="#blocks"/><use href="#fly"/></svg></button>
        <button class="v" aria-label="块编辑"><svg class="i"><path d="M6 1h7l4 4v10H6z" fill="#cfe2f6" stroke="#4a7098"/><use href="#blocks" y="2" width="16" height="16"/><use href="#fly"/></svg></button>
        <button class="v" aria-label="视口"><svg class="i"><path d="M1 3h15v12H1z" fill="#cfe2f6" stroke="#4a7098"/><path d="M9 10h7v5H9z" fill="#fff" stroke="#4a7098"/><use href="#fly"/></svg></button>
        <button class="v big" aria-label="文字">A<svg class="corner"><use href="#fly" x="-12" y="-12" width="18" height="18"/></svg></button>
        <button class="v" aria-label="更多"><svg class="i"><path d="M2 4h3M7 4h3M2 7h3M9 9l7-7M12 2h4v4M4 9l4 4" stroke="#222" stroke-width="2"/></svg></button>
      </div>
    </div>
    <main class="canvas">
      <svg class="drawing">
        <g transform="translate(-295 -106)">
          <g class="cad">
            <path d="M492 405.500L551 386.500 606 377 652 374.500 678 374.500 728 379.500 770 389.500 784 393 823 408 850 419.500 902 450 943 481"/>
            <path d="M556.500 264L577 382M774 291.500H703.500L696 377M917 350.500H848L824 408 656 812M959.500 369L656 812 772 390"/>
          </g>
          <path class="head" d="M577.500 383l-6-13 5-1zM695.500 378l-2-14 5 .5zM773 389l-1 14-5-1.500zM823 409l2-13 4.500 1.500zM904.500 450l-6 12-4-3z"/>
          <g class="dims">
            <text transform="translate(564 267) rotate(80.500)">R98.2</text>
            <text x="706" y="286">R98.2</text>
            <text x="852" y="345">R98.2</text>
            <text transform="translate(731 518) rotate(-74)">R98.2</text>
            <text transform="translate(915 425) rotate(-57)">R98.2</text>
          </g>
          <text class="axis" x="313" y="755">Y</text>
          <path class="ucs" d="M318.500 766.500l-7 19h15zM318.500 766v72M318.500 768l-3 17M318.500 768l3 17"/>
          <path class="ucs" d="M627 595.500h64M659.500 564v64"/>
        </g>
      </svg>
      <form class="prompt">
        <span class="ask">（单个）指定第一个尺寸界线原点或<svg class="down"><path d="M0 0h11v11H0z" fill="#dfe8ff" stroke="none"/><path d="M5.500 1v6M3 5l2.500 2.500L8 5M1 9.500h9" stroke="#1c38b0" stroke-width="1.500"/></svg></span>
        <span class="coord live"><input aria-label="X 坐标" value="258.0394"></span>
        <span class="coord"><input aria-label="Y 坐标" value="414.1372"></span>
      </form>
    </main>
  </div>
  <svg class="badge"><path d="M0 0h18v36H0z" fill="#1f78ac" stroke="none"/><path d="M5 21c0-7 5-11 13-11v10l-5 1-4 3zM9 25l9-3v8z" fill="#fff" stroke="none"/><path d="M9 20l4-5 5 3" stroke="#1f78ac"/><path d="M18 1H1v34h17" stroke="#0b2a48" stroke-width="2"/></svg>
</div>
</body>
</html>
```
FILE: styles.css
```css
:root {
  --face: #ece9d8;
  --line: #b5b2a2;
  --mono: "Liberation Mono", "Noto Sans CJK SC", monospace;
  --cjk: "Noto Sans CJK SC", sans-serif;
}
* { box-sizing: border-box; }
body {
  margin: 0;
  height: 100vh;
  padding: 0 100px 161px 0;
  background: #fff;
  font: 12px/16px var(--cjk);
  color: #000;
}
button {
  margin: 0;
  padding: 0;
  border: 0;
  background: none;
  font: inherit;
  color: inherit;
}
svg { display: block; flex: none; fill: none; stroke: #111; overflow: hidden; }
i { display: block; flex: none; }
.sprite { position: absolute; width: 0; height: 0; }
.lat { font-family: var(--mono); font-size: 10px; white-space: pre; }
.i { width: 18px; height: 18px; }
.i9 { width: 9px; height: 9px; }
.i5 { width: 5px; height: 4px; }

.app {
  position: relative;
  height: 100%;
  display: flex;
  flex-direction: column;
  overflow: hidden;
  border-left: 3px solid #1048d8;
  background: var(--face);
}
.titlebar {
  flex: none;
  display: flex;
  align-items: center;
  gap: 5px;
  height: 28px;
  margin-left: -3px;
  padding-left: 5px;
  background: linear-gradient(#0a50d0, #2278f0 2px, #0855e0 8px, #0058ec 16px, #0068ff 24px, #0050dc);
  color: #fff;
}
.titlebar h1 {
  margin: 0;
  font: bold 13px/20px var(--mono);
  white-space: pre;
  text-shadow: 1px 1px #0a2c90;
}
.titlebar .cjk { font: bold 15px/20px var(--cjk); }
.app-icon { width: 16px; height: 16px; }
.menubar { flex: none; display: flex; align-items: center; height: 20px; padding-left: 5px; }
.menubar button { padding: 0 6px; white-space: nowrap; }
.menu-icon { width: 16px; height: 16px; margin-right: -1px; }

.bars { flex: none; border-bottom: 1px solid #77756a; }
.bar-row { display: flex; height: 29px; padding-left: 1px; overflow: hidden; }
.bar-row:first-child { height: 28px; }
.bar {
  flex: none;
  display: flex;
  align-items: center;
  padding-right: 5px;
  border-right: 1px solid #8f8c7c;
  border-top: 1px solid #fff;
  border-bottom: 1px solid var(--line);
}
.bar:last-child { padding-right: 2px; }
.grip {
  width: 8px;
  height: 22px;
  margin: 0 2px;
  background: linear-gradient(90deg, #fff 2px, #aca899 2px 3px, transparent 3px 4px, #fff 4px 6px, #aca899 6px 7px, transparent 7px);
}
.t { flex: none; width: 23px; height: 24px; display: grid; place-items: center; }
.sep { width: 1px; height: 20px; margin: 0 3px 0 2px; background: var(--line); }
.tiny { width: 13px; display: grid; place-items: center; }
.abc { font-size: 9px; text-decoration: line-through; }
.dbl { font: bold 12px/14px "Liberation Serif", serif; text-decoration: underline double; }
.layer-combo {
  width: 300px;
  height: 22px;
  display: flex;
  align-items: center;
  padding-left: 3px;
  border: 1px solid #c8c5b6;
}
.layer-combo .i { width: 17px; }
.swatch { flex: none; display: inline-block; width: 10px; height: 10px; border: 1px solid #111; background: #00ff00; }
.dim { margin-left: 5px; color: #aaa89c; }
.combo-arrow {
  display: grid;
  place-items: center;
  width: 17px;
  height: 18px;
  margin-left: auto;
  border: 1px solid #dedbd0;
  background: #f4f3ee;
}

.workspace { flex: 1; min-height: 0; display: flex; }
.side { flex: none; width: 258px; display: flex; flex-direction: column; background: #efeee9; }
.props { flex: none; padding-top: 4px; border-bottom: 2px solid #111; }
.dock-grip { display: flex; align-items: center; gap: 4px; padding-left: 5px; }
.dock-grip i { width: 231px; height: 5px; border: solid #aca899; border-width: 1px 1px 1px 0; box-shadow: 0 1px #fff; }
.close { width: 11px; height: 11px; display: grid; place-items: center; border: 1px solid #666; border-width: 0 1px 1px 0; background: #fff; }
.picker { display: flex; gap: 6px; padding: 8px 0 0 20px; }
.select-wrap { display: flex; width: 149px; height: 24px; border: 1px solid #7f9db9; background: #fff; }
.select-wrap select {
  flex: 1;
  appearance: none;
  border: 0;
  padding: 0 0 4px 3px;
  background: none;
  font: 12px/18px var(--cjk);
  color: #000;
}
.drop { width: 16px; margin: 1px; display: grid; place-items: center; background: linear-gradient(#dbe6fd, #b3c8f4); }
.pick-buttons { display: flex; border: 1px solid #b9b6a6; background: var(--face); }
.pick-buttons button { width: 24px; display: grid; place-items: center; border-left: 1px solid #b9b6a6; }
.pick-buttons button:first-child { width: 22px; border: 0; }
.prop-body { display: flex; gap: 7px; height: 287px; margin-top: 10px; padding-left: 1px; overflow: hidden; }
.scroll { flex: none; width: 10px; display: flex; flex-direction: column; }
.scroll button { width: 10px; height: 11px; flex: none; display: grid; place-items: center; background: #d4d1c4; }
.thumb { flex: 8; background: #c9c6b8; }
.track { flex: 3; background: #fff; }
.groups { width: 228px; overflow: hidden; }
.group { margin-bottom: 7px; }
.group h2 {
  display: flex;
  align-items: center;
  justify-content: space-between;
  height: 17px;
  margin: 0;
  padding: 0 11px 0 6px;
  border-radius: 6px 6px 0 0;
  background: #c8c4b2;
  color: #fff;
  font: bold 13px/17px var(--cjk);
}
.group h2 svg { width: 10px; height: 12px; }
.group table { width: 212px; margin-left: 16px; table-layout: fixed; border-collapse: collapse; }
.group tr { height: 16px; }
.group th, .group td { height: 16px; padding: 0; border: 1px solid #c4c1b2; line-height: 14px; white-space: nowrap; text-align: left; vertical-align: middle; }
.group tr:first-child th, .group tr:first-child td { border-top: 0; }
.group th { width: 87px; padding-left: 4px; font: 12px/14px var(--cjk); }
.group th .lat { line-height: 8px; }
.group td { padding-left: 1px; font-family: var(--mono); font-size: 10px; }
.group td.w { background: #fff; }
.group td.c { font: 12px/14px var(--cjk); }
.group td .swatch { margin: 0 5px 0 2px; vertical-align: middle; }
.rule { display: inline-block; width: 52px; height: 1px; margin: 0 4px; background: #000; vertical-align: middle; }
.hint { width: 228px; height: 31px; margin: 7px 0 16px 19px; border: 1px solid #c0bdb0; }

.browser { flex: 1; min-height: 0; display: flex; flex-direction: column; padding-top: 4px; background: var(--face); }
.browser .dock-grip { gap: 6px; }
.tabs { display: flex; align-items: flex-end; height: 28px; padding: 4px 0 0 8px; }
.tab { width: 44px; height: 18px; border: 1px solid #919b9c; border-bottom: 0; border-radius: 3px 3px 0 0; background: #f8f8f4; line-height: 17px; }
.tab.on { width: 51px; height: 20px; padding-right: 14px; border-top: 2px solid #f09a28; background: #fdfdfb; line-height: 17px; }
.tab-page { flex: 1; min-height: 0; margin: 0 10px 0 8px; padding: 1px 1px 0 3px; border: 1px solid #919b9c; border-bottom: 0; display: flex; background: #fcfcfa; }
.tree { flex: 1; border: 1px solid #000; border-bottom: 0; background: #fff; }
.node { display: flex; align-items: center; height: 16px; margin-top: 1px; padding-left: 9px; }
.dots { width: 9px; height: 1px; background: repeating-linear-gradient(90deg, #999 0 1px, transparent 1px 2px); }
.node-icon { width: 15px; height: 15px; margin-right: 1px; }
.picked { padding-top: 2px; background: #316ac5; color: #fff; line-height: 14px; }

.vbar-strip {
  flex: none;
  width: 34px;
  padding-left: 6px;
  overflow: hidden;
  border-right: 2px solid #77756a;
  background: linear-gradient(90deg, #efeee2 3px, #fff 3px 4px, var(--face) 4px 6px, #111 6px 7px, var(--face) 7px);
}
.vbar { display: flex; flex-direction: column; align-items: center; margin-left: 1px; padding-bottom: 5px; border-bottom: 1px solid #8f8c7c; border-right: 1px solid var(--line); }
.vgrip {
  width: 20px;
  height: 7px;
  margin: 1px 0 4px;
  background: linear-gradient(#fff 2px, #aca899 2px 3px, transparent 3px 4px, #fff 4px 6px, #aca899 6px 7px);
}
.vbar:first-child .vgrip { margin-top: -2px; }
.v { position: relative; flex: none; width: 24px; height: 22px; display: grid; place-items: center; }
.vsep { width: 20px; height: 1px; margin: 2px 0 3px; background: var(--line); }
.big { font: 19px/22px "Liberation Sans", sans-serif; }
.corner { position: absolute; right: 3px; bottom: 2px; width: 6px; height: 6px; }

.canvas { position: relative; flex: 1; min-width: 0; overflow: hidden; background: #000; }
.drawing { width: 100%; height: 100%; }
.cad { stroke: #00f800; shape-rendering: crispEdges; }
.head { fill: #00ff00; stroke: none; }
.dims, .axis { font: 300 26px Roboto, sans-serif; fill: #10e810; stroke: none; }
.axis { fill: #fff; font-size: 24px; font-weight: 100; }
.ucs { stroke: #fff; shape-rendering: crispEdges; }
.prompt { position: absolute; left: 380px; top: 506px; display: flex; gap: 3px; }
.ask, .coord { height: 18px; border: 1px solid #77748a; background: #2b2a42; color: #c8c6d4; }
.ask { display: flex; justify-content: space-between; width: 218px; padding-right: 3px; line-height: 15px; white-space: nowrap; text-indent: -4px; }
.down { width: 11px; height: 11px; }
.coord { display: flex; width: 60px; padding: 1px; }
.coord input { width: 52px; min-width: 0; border: 0; padding: 0; background: none; color: inherit; font: 10px/14px var(--mono); }
.coord.live { background: #fff; color: #fff; }
.coord.live input { width: 49px; background: #316ac5; }

.badge { position: absolute; top: 16px; right: 0; width: 17px; height: 36px; }
```
